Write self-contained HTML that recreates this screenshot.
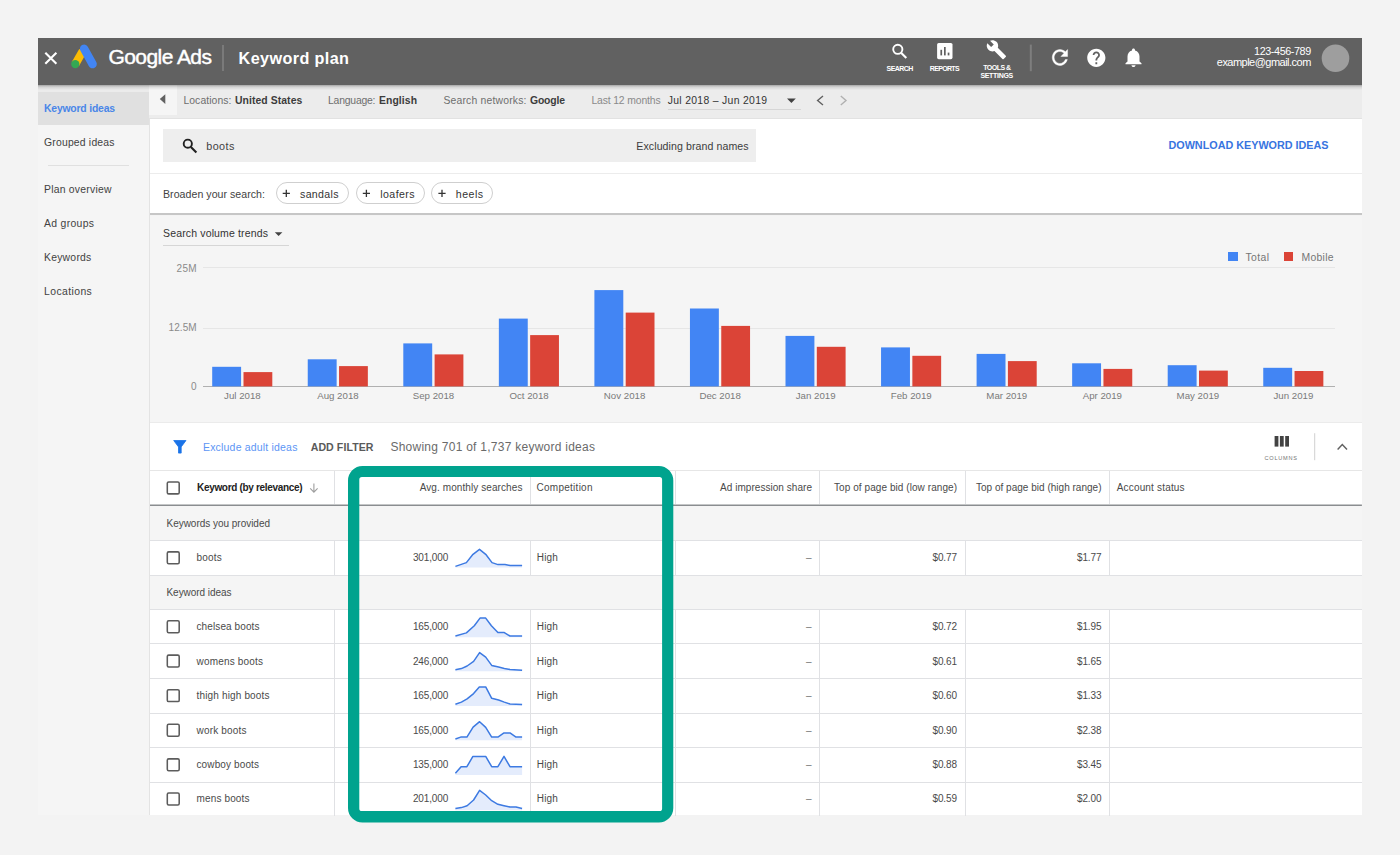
<!DOCTYPE html>
<html lang="en">
<head>
<meta charset="utf-8">
<title>Keyword plan - Google Ads</title>
<style>
html,body{margin:0;padding:0}
body{width:1400px;height:855px;position:relative;overflow:hidden;background:#f3f3f3;font-family:"Liberation Sans", sans-serif;}
.b{position:absolute;box-sizing:border-box}
.t{position:absolute;white-space:nowrap;line-height:1;margin:0;padding:0}
svg{position:absolute;left:0;top:0;overflow:visible}
</style>
</head>
<body>
<div class="b " style="left:37.9px;top:84.6px;width:112.0px;height:730.8px;background:#f5f5f5;border-right:1px solid #e3e3e3;"></div>
<div class="b " style="left:37.9px;top:84.6px;width:111.1px;height:7.4px;background:#ebebeb;"></div>
<div class="b " style="left:37.9px;top:92px;width:111.1px;height:32.5px;background:#e0e0e0;"></div>
<div class="b " style="left:47.5px;top:165.3px;width:81.0px;height:1.0px;background:#e0e0e0;"></div>
<div class="b " style="left:149px;top:84.6px;width:1212.9px;height:34.1px;background:#ececec;"></div>
<div class="b " style="left:149px;top:117.7px;width:1212.9px;height:1.0px;background:#e2e2e2;"></div>
<div class="b " style="left:149px;top:84.6px;width:27.5px;height:30.4px;background:#f5f5f5;"></div>
<svg width="1400" height="855"><path d="M165.3 94.3 L159.8 99.1 L165.3 103.9 Z" fill="#616161"/></svg>
<div class="b " style="left:667.7px;top:109px;width:133.7px;height:1px;background:#d6d6d6;"></div>
<svg width="1400" height="855"><path d="M787 98.6 L795.8 98.6 L791.4 103 Z" fill="#424242"/><path d="M823 96 L817.6 100.5 L823 105" fill="none" stroke="#616161" stroke-width="1.4"/><path d="M840.8 96 L846 100.5 L840.8 105" fill="none" stroke="#b0b0b0" stroke-width="1.4"/></svg>
<div class="b " style="left:37.9px;top:38px;width:1324.0px;height:46.6px;background:#616161;"></div>
<div class="b " style="left:37.9px;top:84.6px;width:1324.0px;height:5.4px;background:linear-gradient(rgba(0,0,0,.30),rgba(0,0,0,.10) 40%,rgba(0,0,0,0));"></div>
<svg width="1400" height="855"><path d="M45.3 52.7 L56.4 63.8 M56.4 52.7 L45.3 63.8" stroke="#fff" stroke-width="2.1" fill="none"/><path d="M75.3 64.1 L82.8 51" stroke="#fbbc04" stroke-width="8.2" fill="none"/><path d="M84.1 48.7 L92.6 64.1" stroke="#4285f4" stroke-width="8.4" stroke-linecap="round" fill="none"/><circle cx="75.3" cy="64.1" r="4.15" fill="#34a853"/><rect x="222.1" y="45" width="1.8" height="26" fill="#7e7e7e"/><rect x="1029.8" y="44.6" width="2" height="26.6" fill="#7e7e7e"/><circle cx="897.8" cy="49.3" r="4.6" stroke="#fff" stroke-width="1.9" fill="none"/><path d="M901.3 52.9 L906.3 57.9" stroke="#fff" stroke-width="2.1" fill="none"/><rect x="937.1" y="43" width="15.4" height="16.2" rx="1.6" fill="#fff"/><rect x="940.4" y="49.8" width="1.7" height="5.6" fill="#616161"/><rect x="944" y="47" width="1.7" height="8.4" fill="#616161"/><rect x="947.7" y="52.6" width="1.7" height="2.8" fill="#616161"/><path transform="translate(985.9,39.2) scale(0.875)" fill="#fff" d="M22.7 19l-9.1-9.1c.9-2.3.4-5-1.5-6.9-2-2-5-2.4-7.4-1.3L9 6 6 9 1.6 4.7C.4 7.1.9 10.1 2.9 12.1c1.9 1.9 4.6 2.4 6.9 1.5l9.1 9.1c.4.4 1 .4 1.4 0l2.3-2.3c.5-.4.5-1.1.1-1.4z"/><path transform="translate(1048.4,45.5) scale(0.96,1.0)" fill="#fff" stroke="#fff" stroke-width="0.4" d="M17.65 6.35C16.2 4.9 14.21 4 12 4c-4.42 0-7.99 3.58-7.99 8s3.57 8 7.99 8c3.73 0 6.84-2.55 7.73-6h-2.08c-.82 2.33-3.04 4-5.65 4-3.31 0-6-2.69-6-6s2.690-6 6-6c1.66 0 3.14.69 4.22 1.78L13 11h7V4l-2.35 2.35z"/><path transform="translate(1085.4,46.9) scale(0.91)" fill="#fff" d="M12 2C6.48 2 2 6.48 2 12s4.48 10 10 10 10-4.48 10-10S17.52 2 12 2zm1 17h-2v-2h2v2zm2.07-7.75l-.9.920C13.45 12.9 13 13.5 13 15h-2v-.5c0-1.1.45-2.1 1.17-2.83l1.240-1.260c.37-.36.59-.86.59-1.410 0-1.1-.9-2-2-2s-2 .9-2 2H8c0-2.210 1.790-4 4-4s4 1.790 4 4c0 .88-.36 1.680-.93 2.250z"/><path transform="translate(1121.5,46.1) scale(1.0,0.955)" fill="#fff" d="M12 22c1.1 0 2-.9 2-2h-4c0 1.1.89 2 2 2zm6-6v-5c0-3.070-1.640-5.640-4.500-6.320V4c0-.83-.67-1.500-1.500-1.500s-1.500.67-1.500 1.500v.68C7.630 5.360 6 7.920 6 11v5l-2 2v1h16v-1l-2-2z"/><circle cx="1335.5" cy="58.2" r="13.8" fill="#9e9e9e"/></svg>
<div class="b " style="left:150px;top:118.7px;width:1211.9px;height:94.3px;background:#fff;"></div>
<div class="b " style="left:150px;top:213.2px;width:1211.9px;height:2.3px;background:#c6c6c6;"></div>
<div class="b " style="left:163px;top:128.6px;width:592.6px;height:33.8px;background:#eeeeee;"></div>
<svg width="1400" height="855"><circle cx="187.8" cy="143.7" r="4.1" stroke="#212121" stroke-width="1.9" fill="none"/><path d="M190.9 146.9 L196.4 152.4" stroke="#212121" stroke-width="2.1" fill="none"/></svg>
<div class="b " style="left:150px;top:172.6px;width:1211.9px;height:1.0px;background:#ececec;"></div>
<div class="b " style="left:275.7px;top:182.3px;width:73.5px;height:22.2px;background:#fff;border:1px solid #cfcfcf;border-radius:11.2px;"></div>
<svg width="1400" height="855"><path d="M282.7 193.4 H289.90000000000003 M286.3 189.8 V197" stroke="#333" stroke-width="1.3" fill="none"/></svg>
<div class="b " style="left:355.8px;top:182.3px;width:69.2px;height:22.2px;background:#fff;border:1px solid #cfcfcf;border-radius:11.2px;"></div>
<svg width="1400" height="855"><path d="M362.8 193.4 H370.00000000000006 M366.40000000000003 189.8 V197" stroke="#333" stroke-width="1.3" fill="none"/></svg>
<div class="b " style="left:431.4px;top:182.3px;width:62.0px;height:22.2px;background:#fff;border:1px solid #cfcfcf;border-radius:11.2px;"></div>
<svg width="1400" height="855"><path d="M438.4 193.4 H445.6 M442.0 189.8 V197" stroke="#333" stroke-width="1.3" fill="none"/></svg>
<div class="b " style="left:150px;top:215.7px;width:1211.9px;height:206.7px;background:#f5f5f5;"></div>
<div class="b " style="left:163px;top:245.3px;width:125.6px;height:1.0px;background:#d6d6d6;"></div>
<svg width="1400" height="855"><path d="M274.8 232.2 L282.4 232.2 L278.6 236 Z" fill="#424242"/></svg>
<div class="b " style="left:202.5px;top:267px;width:1132.8px;height:1px;background:#e6e6e6;"></div>
<div class="b " style="left:202.5px;top:327.6px;width:1132.8px;height:1.0px;background:#e6e6e6;"></div>
<div class="b " style="left:202.5px;top:385.6px;width:1132.8px;height:1.0px;background:#b0b0b0;"></div>
<svg width="1400" height="855"><rect x="212.20" y="366.8" width="28.9" height="19.60" fill="#4285f4"/><rect x="243.50" y="372.1" width="28.8" height="14.30" fill="#db4437"/><rect x="307.75" y="359.3" width="28.9" height="27.10" fill="#4285f4"/><rect x="339.05" y="366.1" width="28.8" height="20.30" fill="#db4437"/><rect x="403.30" y="343.4" width="28.9" height="43.00" fill="#4285f4"/><rect x="434.60" y="354.4" width="28.8" height="32.00" fill="#db4437"/><rect x="498.85" y="318.6" width="28.9" height="67.80" fill="#4285f4"/><rect x="530.15" y="335.1" width="28.8" height="51.30" fill="#db4437"/><rect x="594.40" y="290.1" width="28.9" height="96.30" fill="#4285f4"/><rect x="625.70" y="312.6" width="28.8" height="73.80" fill="#db4437"/><rect x="689.95" y="308.5" width="28.9" height="77.90" fill="#4285f4"/><rect x="721.25" y="325.9" width="28.8" height="60.50" fill="#db4437"/><rect x="785.50" y="335.9" width="28.9" height="50.50" fill="#4285f4"/><rect x="816.80" y="346.8" width="28.8" height="39.60" fill="#db4437"/><rect x="881.05" y="347.4" width="28.9" height="39.00" fill="#4285f4"/><rect x="912.35" y="355.8" width="28.8" height="30.60" fill="#db4437"/><rect x="976.60" y="353.9" width="28.9" height="32.50" fill="#4285f4"/><rect x="1007.90" y="361.1" width="28.8" height="25.30" fill="#db4437"/><rect x="1072.15" y="363.3" width="28.9" height="23.10" fill="#4285f4"/><rect x="1103.45" y="368.9" width="28.8" height="17.50" fill="#db4437"/><rect x="1167.70" y="365.2" width="28.9" height="21.20" fill="#4285f4"/><rect x="1199.00" y="370.6" width="28.8" height="15.80" fill="#db4437"/><rect x="1263.25" y="367.8" width="28.9" height="18.60" fill="#4285f4"/><rect x="1294.55" y="371.0" width="28.8" height="15.40" fill="#db4437"/></svg>
<div class="b " style="left:1228px;top:251.5px;width:10px;height:9.5px;background:#4285f4;"></div>
<div class="b " style="left:1283.5px;top:251.5px;width:9.5px;height:9.5px;background:#db4437;"></div>
<div class="b " style="left:150px;top:422.4px;width:1211.9px;height:393.0px;background:#fff;"></div>
<div class="b " style="left:150px;top:422.4px;width:1211.9px;height:0.8px;background:#ebebeb;"></div>
<svg width="1400" height="855"><path d="M173.7 440.5 H186 L181.2 446.9 V453.1 H178.5 V446.9 Z" fill="#1a73e8" stroke="#1a73e8" stroke-width="0.8" stroke-linejoin="round"/><rect x="1274.6" y="436" width="3.8" height="10.6" fill="#424242"/><rect x="1279.9" y="436" width="3.8" height="10.6" fill="#424242"/><rect x="1285.2" y="436" width="3.8" height="10.6" fill="#424242"/><rect x="1314.2" y="433.2" width="1" height="27" fill="#d0d0d0"/><path d="M1337.6 449.4 L1342.3 444.6 L1347 449.4" stroke="#616161" stroke-width="1.5" fill="none"/></svg>
<div class="b " style="left:150px;top:470.3px;width:1211.9px;height:1.0px;background:#e6e6e6;"></div>
<svg width="1400" height="855"><rect x="150" y="504.5" width="1211.9" height="1.7" fill="#8a8d90"/></svg>
<div class="b " style="left:333.5px;top:471.3px;width:1.0px;height:33.1px;background:#e0e1e4;"></div>
<div class="b " style="left:529.5px;top:471.3px;width:1.0px;height:33.1px;background:#e0e1e4;"></div>
<div class="b " style="left:674.5px;top:471.3px;width:1.0px;height:33.1px;background:#e0e1e4;"></div>
<div class="b " style="left:818.5px;top:471.3px;width:1.0px;height:33.1px;background:#e0e1e4;"></div>
<div class="b " style="left:964.5px;top:471.3px;width:1.0px;height:33.1px;background:#e0e1e4;"></div>
<div class="b " style="left:1108.5px;top:471.3px;width:1.0px;height:33.1px;background:#e0e1e4;"></div>
<svg width="1400" height="855"><rect x="167.3" y="481.95" width="11.9" height="11.9" rx="1.4" fill="#fff" stroke="#5c5c5c" stroke-width="1.55"/></svg>
<svg width="1400" height="855"><path d="M313.9 483.6 V492 M310.2 488.4 L313.9 492.1 L317.6 488.4" stroke="#9e9e9e" stroke-width="1.1" fill="none"/></svg>
<div class="b " style="left:150px;top:505.6px;width:1211.9px;height:34.9px;background:#f5f5f5;"></div>
<div class="b " style="left:333.5px;top:540.5px;width:1.0px;height:34.6px;background:#e0e1e4;"></div>
<div class="b " style="left:529.5px;top:540.5px;width:1.0px;height:34.6px;background:#e0e1e4;"></div>
<div class="b " style="left:674.5px;top:540.5px;width:1.0px;height:34.6px;background:#e0e1e4;"></div>
<div class="b " style="left:818.5px;top:540.5px;width:1.0px;height:34.6px;background:#e0e1e4;"></div>
<div class="b " style="left:964.5px;top:540.5px;width:1.0px;height:34.6px;background:#e0e1e4;"></div>
<div class="b " style="left:1108.5px;top:540.5px;width:1.0px;height:34.6px;background:#e0e1e4;"></div>
<svg width="1400" height="855"><rect x="167.3" y="551.85" width="11.9" height="11.9" rx="1.4" fill="#fff" stroke="#5c5c5c" stroke-width="1.55"/></svg>
<div class="b " style="left:150px;top:575.1px;width:1211.9px;height:34.5px;background:#f5f5f5;"></div>
<div class="b " style="left:333.5px;top:609.6px;width:1.0px;height:34.3px;background:#e0e1e4;"></div>
<div class="b " style="left:529.5px;top:609.6px;width:1.0px;height:34.3px;background:#e0e1e4;"></div>
<div class="b " style="left:674.5px;top:609.6px;width:1.0px;height:34.3px;background:#e0e1e4;"></div>
<div class="b " style="left:818.5px;top:609.6px;width:1.0px;height:34.3px;background:#e0e1e4;"></div>
<div class="b " style="left:964.5px;top:609.6px;width:1.0px;height:34.3px;background:#e0e1e4;"></div>
<div class="b " style="left:1108.5px;top:609.6px;width:1.0px;height:34.3px;background:#e0e1e4;"></div>
<svg width="1400" height="855"><rect x="167.3" y="620.80" width="11.9" height="11.9" rx="1.4" fill="#fff" stroke="#5c5c5c" stroke-width="1.55"/></svg>
<div class="b " style="left:333.5px;top:643.9px;width:1.0px;height:34.3px;background:#e0e1e4;"></div>
<div class="b " style="left:529.5px;top:643.9px;width:1.0px;height:34.3px;background:#e0e1e4;"></div>
<div class="b " style="left:674.5px;top:643.9px;width:1.0px;height:34.3px;background:#e0e1e4;"></div>
<div class="b " style="left:818.5px;top:643.9px;width:1.0px;height:34.3px;background:#e0e1e4;"></div>
<div class="b " style="left:964.5px;top:643.9px;width:1.0px;height:34.3px;background:#e0e1e4;"></div>
<div class="b " style="left:1108.5px;top:643.9px;width:1.0px;height:34.3px;background:#e0e1e4;"></div>
<svg width="1400" height="855"><rect x="167.3" y="655.10" width="11.9" height="11.9" rx="1.4" fill="#fff" stroke="#5c5c5c" stroke-width="1.55"/></svg>
<div class="b " style="left:333.5px;top:678.2px;width:1.0px;height:34.8px;background:#e0e1e4;"></div>
<div class="b " style="left:529.5px;top:678.2px;width:1.0px;height:34.8px;background:#e0e1e4;"></div>
<div class="b " style="left:674.5px;top:678.2px;width:1.0px;height:34.8px;background:#e0e1e4;"></div>
<div class="b " style="left:818.5px;top:678.2px;width:1.0px;height:34.8px;background:#e0e1e4;"></div>
<div class="b " style="left:964.5px;top:678.2px;width:1.0px;height:34.8px;background:#e0e1e4;"></div>
<div class="b " style="left:1108.5px;top:678.2px;width:1.0px;height:34.8px;background:#e0e1e4;"></div>
<svg width="1400" height="855"><rect x="167.3" y="689.65" width="11.9" height="11.9" rx="1.4" fill="#fff" stroke="#5c5c5c" stroke-width="1.55"/></svg>
<div class="b " style="left:333.5px;top:713.0px;width:1.0px;height:34.5px;background:#e0e1e4;"></div>
<div class="b " style="left:529.5px;top:713.0px;width:1.0px;height:34.5px;background:#e0e1e4;"></div>
<div class="b " style="left:674.5px;top:713.0px;width:1.0px;height:34.5px;background:#e0e1e4;"></div>
<div class="b " style="left:818.5px;top:713.0px;width:1.0px;height:34.5px;background:#e0e1e4;"></div>
<div class="b " style="left:964.5px;top:713.0px;width:1.0px;height:34.5px;background:#e0e1e4;"></div>
<div class="b " style="left:1108.5px;top:713.0px;width:1.0px;height:34.5px;background:#e0e1e4;"></div>
<svg width="1400" height="855"><rect x="167.3" y="724.30" width="11.9" height="11.9" rx="1.4" fill="#fff" stroke="#5c5c5c" stroke-width="1.55"/></svg>
<div class="b " style="left:333.5px;top:747.5px;width:1.0px;height:34.6px;background:#e0e1e4;"></div>
<div class="b " style="left:529.5px;top:747.5px;width:1.0px;height:34.6px;background:#e0e1e4;"></div>
<div class="b " style="left:674.5px;top:747.5px;width:1.0px;height:34.6px;background:#e0e1e4;"></div>
<div class="b " style="left:818.5px;top:747.5px;width:1.0px;height:34.6px;background:#e0e1e4;"></div>
<div class="b " style="left:964.5px;top:747.5px;width:1.0px;height:34.6px;background:#e0e1e4;"></div>
<div class="b " style="left:1108.5px;top:747.5px;width:1.0px;height:34.6px;background:#e0e1e4;"></div>
<svg width="1400" height="855"><rect x="167.3" y="758.85" width="11.9" height="11.9" rx="1.4" fill="#fff" stroke="#5c5c5c" stroke-width="1.55"/></svg>
<div class="b " style="left:333.5px;top:782.1px;width:1.0px;height:33.7px;background:#e0e1e4;"></div>
<div class="b " style="left:529.5px;top:782.1px;width:1.0px;height:33.7px;background:#e0e1e4;"></div>
<div class="b " style="left:674.5px;top:782.1px;width:1.0px;height:33.7px;background:#e0e1e4;"></div>
<div class="b " style="left:818.5px;top:782.1px;width:1.0px;height:33.7px;background:#e0e1e4;"></div>
<div class="b " style="left:964.5px;top:782.1px;width:1.0px;height:33.7px;background:#e0e1e4;"></div>
<div class="b " style="left:1108.5px;top:782.1px;width:1.0px;height:33.7px;background:#e0e1e4;"></div>
<svg width="1400" height="855"><rect x="167.3" y="793.00" width="11.9" height="11.9" rx="1.4" fill="#fff" stroke="#5c5c5c" stroke-width="1.55"/></svg>
<div class="b " style="left:150px;top:540.0px;width:1211.9px;height:1.0px;background:#e0e1e4;"></div>
<div class="b " style="left:150px;top:574.6px;width:1211.9px;height:1.0px;background:#e0e1e4;"></div>
<div class="b " style="left:150px;top:609.1px;width:1211.9px;height:1.0px;background:#e0e1e4;"></div>
<div class="b " style="left:150px;top:643.4px;width:1211.9px;height:1.0px;background:#e0e1e4;"></div>
<div class="b " style="left:150px;top:677.7px;width:1211.9px;height:1.0px;background:#e0e1e4;"></div>
<div class="b " style="left:150px;top:712.5px;width:1211.9px;height:1.0px;background:#e0e1e4;"></div>
<div class="b " style="left:150px;top:747.0px;width:1211.9px;height:1.0px;background:#e0e1e4;"></div>
<div class="b " style="left:150px;top:781.6px;width:1211.9px;height:1.0px;background:#e0e1e4;"></div>
<svg width="1400" height="855"><polygon points="455.4,567.6 455.4,566.4 466.4,562.6 473,554.3 479.5,549.3 485.7,554.3 492,562.6 498,564.6 505,564.6 510,565.4 522.1,565.4 522.1,567.6" fill="#e4ecfc"/><polyline points="455.4,566.4 466.4,562.6 473,554.3 479.5,549.3 485.7,554.3 492,562.6 498,564.6 505,564.6 510,565.4 522.1,565.4" fill="none" stroke="#3d7ae2" stroke-width="1.5" stroke-linejoin="round"/><polygon points="455.4,637.3 455.4,636 466.4,632.9 474.3,625.7 480,618.1 485.7,618.1 491.4,625.7 497.9,632.6 504.3,632.6 510,636 522.1,636 522.1,637.3" fill="#e4ecfc"/><polyline points="455.4,636 466.4,632.9 474.3,625.7 480,618.1 485.7,618.1 491.4,625.7 497.9,632.6 504.3,632.6 510,636 522.1,636" fill="none" stroke="#3d7ae2" stroke-width="1.5" stroke-linejoin="round"/><polygon points="455.4,671.3 455.4,669.7 461.4,668.6 467.1,666 473.6,661.4 479.6,652.6 485.7,657.1 491.7,665.4 498.6,667.1 504.3,668.6 510,669.4 522.1,670.3 522.1,671.3" fill="#e4ecfc"/><polyline points="455.4,669.7 461.4,668.6 467.1,666 473.6,661.4 479.6,652.6 485.7,657.1 491.7,665.4 498.6,667.1 504.3,668.6 510,669.4 522.1,670.3" fill="none" stroke="#3d7ae2" stroke-width="1.5" stroke-linejoin="round"/><polygon points="455.4,705.9 455.4,704.3 461.4,702.1 467.1,698.9 473.6,693.6 479.3,686.9 485.7,686.9 491.7,698.3 498.6,700 504.3,702.1 510,704 522.1,704.6 522.1,705.9" fill="#e4ecfc"/><polyline points="455.4,704.3 461.4,702.1 467.1,698.9 473.6,693.6 479.3,686.9 485.7,686.9 491.7,698.3 498.6,700 504.3,702.1 510,704 522.1,704.6" fill="none" stroke="#3d7ae2" stroke-width="1.5" stroke-linejoin="round"/><polygon points="455.4,740.2 455.4,739 460.7,737.1 466.9,737.1 473.1,727.1 479.6,721.7 485.7,727.4 491.7,737.1 497.9,737.1 504,732.9 510,732.9 516,737.1 522.1,737.1 522.1,740.2" fill="#e4ecfc"/><polyline points="455.4,739 460.7,737.1 466.9,737.1 473.1,727.1 479.6,721.7 485.7,727.4 491.7,737.1 497.9,737.1 504,732.9 510,732.9 516,737.1 522.1,737.1" fill="none" stroke="#3d7ae2" stroke-width="1.5" stroke-linejoin="round"/><polygon points="455.4,774.9 455.4,773.3 461.1,766.7 466.9,766.7 472.9,756.4 485.7,756.4 491.7,766.7 497.9,766.7 504,756.4 510,766.7 522.1,766.7 522.1,774.9" fill="#e4ecfc"/><polyline points="455.4,773.3 461.1,766.7 466.9,766.7 472.9,756.4 485.7,756.4 491.7,766.7 497.9,766.7 504,756.4 510,766.7 522.1,766.7" fill="none" stroke="#3d7ae2" stroke-width="1.5" stroke-linejoin="round"/><polygon points="455.4,810.2 455.4,808.6 461.4,807.6 467.1,805.7 473.6,800 479.6,790.4 485.7,795 491.7,800.7 497.9,804.3 504,805.7 510,807.1 516,807.1 522.1,808.6 522.1,810.2" fill="#e4ecfc"/><polyline points="455.4,808.6 461.4,807.6 467.1,805.7 473.6,800 479.6,790.4 485.7,795 491.7,800.7 497.9,804.3 504,805.7 510,807.1 516,807.1 522.1,808.6" fill="none" stroke="#3d7ae2" stroke-width="1.5" stroke-linejoin="round"/></svg>
<span class="t" id="t0" style="top:103.74px;font-size:10.4px;color:#4a86e8;font-weight:700;letter-spacing:-0.195px;left:44.00px;">Keyword ideas</span>
<span class="t" id="t1" style="top:137.54px;font-size:10.4px;color:#424242;letter-spacing:0.194px;left:44.00px;">Grouped ideas</span>
<span class="t" id="t2" style="top:185.34px;font-size:10.4px;color:#424242;letter-spacing:0.234px;left:44.00px;">Plan overview</span>
<span class="t" id="t3" style="top:219.14px;font-size:10.4px;color:#424242;letter-spacing:0.328px;left:44.00px;">Ad groups</span>
<span class="t" id="t4" style="top:252.84px;font-size:10.4px;color:#424242;letter-spacing:0.239px;left:44.00px;">Keywords</span>
<span class="t" id="t5" style="top:286.54px;font-size:10.4px;color:#424242;letter-spacing:0.414px;left:44.00px;">Locations</span>
<span class="t" id="t6" style="top:96.44px;font-size:10.4px;color:#6e6e6e;letter-spacing:0.081px;left:183.40px;">Locations:</span>
<span class="t" id="t7" style="top:96.44px;font-size:10.4px;color:#3c3c3c;font-weight:700;letter-spacing:0.074px;left:235.00px;">United States</span>
<span class="t" id="t8" style="top:96.44px;font-size:10.4px;color:#6e6e6e;letter-spacing:-0.203px;left:328.00px;">Language:</span>
<span class="t" id="t9" style="top:96.44px;font-size:10.4px;color:#3c3c3c;font-weight:700;letter-spacing:0.078px;left:379.00px;">English</span>
<span class="t" id="t10" style="top:96.44px;font-size:10.4px;color:#6e6e6e;letter-spacing:0.188px;left:443.40px;">Search networks:</span>
<span class="t" id="t11" style="top:96.44px;font-size:10.4px;color:#3c3c3c;font-weight:700;letter-spacing:-0.159px;left:530.00px;">Google</span>
<span class="t" id="t12" style="top:96.44px;font-size:10.4px;color:#8a8a8a;letter-spacing:-0.142px;left:591.40px;">Last 12 months</span>
<span class="t" id="t13" style="top:96.44px;font-size:10.4px;color:#333;letter-spacing:0.323px;left:667.70px;">Jul 2018 – Jun 2019</span>
<span class="t" id="t14" style="top:45.88px;font-size:21px;color:#fff;letter-spacing:-0.555px;left:108.40px;-webkit-text-stroke:0.45px #fff;">Google Ads</span>
<span class="t" id="t15" style="top:50.12px;font-size:16.2px;color:#fff;font-weight:700;letter-spacing:0.387px;left:238.60px;">Keyword plan</span>
<span class="t" id="t16" style="top:65.39px;font-size:7px;color:#fff;font-weight:700;letter-spacing:-0.592px;left:886.60px;">SEARCH</span>
<span class="t" id="t17" style="top:65.39px;font-size:7px;color:#fff;font-weight:700;letter-spacing:-0.674px;left:929.80px;">REPORTS</span>
<span class="t" id="t18" style="top:64.19px;font-size:7px;color:#fff;font-weight:700;letter-spacing:-0.531px;left:983.20px;">TOOLS &amp;</span>
<span class="t" id="t19" style="top:71.79px;font-size:7px;color:#fff;font-weight:700;letter-spacing:-0.317px;left:980.40px;">SETTINGS</span>
<span class="t" id="t20" style="top:46.15px;font-size:10.8px;color:#fff;letter-spacing:-0.413px;left:1254.10px;">123-456-789</span>
<span class="t" id="t21" style="top:57.45px;font-size:11px;color:#fff;letter-spacing:-0.523px;left:1216.80px;">example@gmail.com</span>
<span class="t" id="t22" style="top:140.75px;font-size:10.8px;color:#424242;letter-spacing:0.395px;left:206.30px;">boots</span>
<span class="t" id="t23" style="top:140.84px;font-size:10.6px;color:#3c3c3c;letter-spacing:0.079px;left:636.30px;">Excluding brand names</span>
<span class="t" id="t24" style="top:140.05px;font-size:10.8px;color:#3874e0;font-weight:700;letter-spacing:-0.007px;left:1168.50px;">DOWNLOAD KEYWORD IDEAS</span>
<span class="t" id="t25" style="top:188.84px;font-size:10.6px;color:#424242;letter-spacing:0.037px;left:163.00px;">Broaden your search:</span>
<span class="t" id="t26" style="top:188.84px;font-size:10.6px;color:#333;letter-spacing:0.331px;left:300.00px;">sandals</span>
<span class="t" id="t27" style="top:188.84px;font-size:10.6px;color:#333;letter-spacing:0.401px;left:380.30px;">loafers</span>
<span class="t" id="t28" style="top:188.84px;font-size:10.6px;color:#333;letter-spacing:0.468px;left:455.80px;">heels</span>
<span class="t" id="t29" style="top:228.49px;font-size:10.5px;color:#333;letter-spacing:0.150px;left:163.00px;">Search volume trends</span>
<span class="t" id="t30" style="top:263.54px;font-size:10px;color:#8a8a8a;letter-spacing:0.273px;left:176.60px;">25M</span>
<span class="t" id="t31" style="top:323.04px;font-size:10px;color:#8a8a8a;letter-spacing:0.051px;left:168.60px;">12.5M</span>
<span class="t" id="t32" style="top:381.54px;font-size:10px;color:#8a8a8a;letter-spacing:0.037px;left:191.00px;">0</span>
<span class="t" id="t33" style="top:391.38px;font-size:9.7px;color:#7a7a7a;left:242.40px;transform:translateX(-50%);">Jul 2018</span>
<span class="t" id="t34" style="top:391.38px;font-size:9.7px;color:#7a7a7a;left:337.95px;transform:translateX(-50%);">Aug 2018</span>
<span class="t" id="t35" style="top:391.38px;font-size:9.7px;color:#7a7a7a;left:433.50px;transform:translateX(-50%);">Sep 2018</span>
<span class="t" id="t36" style="top:391.38px;font-size:9.7px;color:#7a7a7a;left:529.05px;transform:translateX(-50%);">Oct 2018</span>
<span class="t" id="t37" style="top:391.38px;font-size:9.7px;color:#7a7a7a;left:624.60px;transform:translateX(-50%);">Nov 2018</span>
<span class="t" id="t38" style="top:391.38px;font-size:9.7px;color:#7a7a7a;left:720.15px;transform:translateX(-50%);">Dec 2018</span>
<span class="t" id="t39" style="top:391.38px;font-size:9.7px;color:#7a7a7a;left:815.70px;transform:translateX(-50%);">Jan 2019</span>
<span class="t" id="t40" style="top:391.38px;font-size:9.7px;color:#7a7a7a;left:911.25px;transform:translateX(-50%);">Feb 2019</span>
<span class="t" id="t41" style="top:391.38px;font-size:9.7px;color:#7a7a7a;left:1006.80px;transform:translateX(-50%);">Mar 2019</span>
<span class="t" id="t42" style="top:391.38px;font-size:9.7px;color:#7a7a7a;left:1102.35px;transform:translateX(-50%);">Apr 2019</span>
<span class="t" id="t43" style="top:391.38px;font-size:9.7px;color:#7a7a7a;left:1197.90px;transform:translateX(-50%);">May 2019</span>
<span class="t" id="t44" style="top:391.38px;font-size:9.7px;color:#7a7a7a;left:1293.45px;transform:translateX(-50%);">Jun 2019</span>
<span class="t" id="t45" style="top:253.14px;font-size:10.4px;color:#757575;letter-spacing:0.387px;left:1245.50px;">Total</span>
<span class="t" id="t46" style="top:253.14px;font-size:10.4px;color:#757575;letter-spacing:0.278px;left:1301.50px;">Mobile</span>
<span class="t" id="t47" style="top:441.59px;font-size:10.5px;color:#5c95f5;letter-spacing:0.185px;left:203.00px;">Exclude adult ideas</span>
<span class="t" id="t48" style="top:441.84px;font-size:10.6px;color:#5a5a5a;font-weight:700;letter-spacing:0.068px;left:310.70px;">ADD FILTER</span>
<span class="t" id="t49" style="top:441.16px;font-size:12px;color:#6a6a6a;letter-spacing:0.256px;left:390.40px;">Showing 701 of 1,737 keyword ideas</span>
<span class="t" id="t50" style="top:456.08px;font-size:5.6px;color:#757575;letter-spacing:0.736px;left:1264.60px;">COLUMNS</span>
<span class="t" id="t51" style="top:483.44px;font-size:10px;color:#222;font-weight:700;letter-spacing:-0.317px;left:197.00px;">Keyword (by relevance)</span>
<span class="t" id="t52" style="top:483.44px;font-size:10px;color:#4a4a4a;letter-spacing:0.086px;left:419.70px;">Avg. monthly searches</span>
<span class="t" id="t53" style="top:483.44px;font-size:10px;color:#4a4a4a;letter-spacing:0.264px;left:536.50px;">Competition</span>
<span class="t" id="t54" style="top:483.44px;font-size:10px;color:#4a4a4a;letter-spacing:0.047px;left:720.00px;">Ad impression share</span>
<span class="t" id="t55" style="top:483.44px;font-size:10px;color:#4a4a4a;letter-spacing:0.070px;left:834.00px;">Top of page bid (low range)</span>
<span class="t" id="t56" style="top:483.44px;font-size:10px;color:#4a4a4a;letter-spacing:0.015px;left:976.00px;">Top of page bid (high range)</span>
<span class="t" id="t57" style="top:483.44px;font-size:10px;color:#4a4a4a;letter-spacing:0.177px;left:1116.70px;">Account status</span>
<span class="t" id="t58" style="top:518.58px;font-size:10px;color:#4a4a4a;letter-spacing:-0.023px;left:166.50px;">Keywords you provided</span>
<span class="t" id="t59" style="top:553.33px;font-size:10px;color:#4a4a4a;letter-spacing:0.208px;left:196.50px;">boots</span>
<span class="t" id="t60" style="top:553.33px;font-size:10px;color:#4a4a4a;letter-spacing:-0.126px;left:412.90px;">301,000</span>
<span class="t" id="t61" style="top:553.33px;font-size:10px;color:#4a4a4a;letter-spacing:0.141px;left:536.80px;">High</span>
<span class="t" id="t62" style="top:553.33px;font-size:10px;color:#757575;letter-spacing:0.438px;left:806.00px;">–</span>
<span class="t" id="t63" style="top:553.33px;font-size:10px;color:#4a4a4a;letter-spacing:-0.133px;left:932.50px;">$0.77</span>
<span class="t" id="t64" style="top:553.33px;font-size:10px;color:#4a4a4a;letter-spacing:-0.133px;left:1077.00px;">$1.77</span>
<span class="t" id="t65" style="top:587.88px;font-size:10px;color:#4a4a4a;letter-spacing:-0.049px;left:166.50px;">Keyword ideas</span>
<span class="t" id="t66" style="top:622.28px;font-size:10px;color:#4a4a4a;letter-spacing:0.107px;left:196.50px;">chelsea boots</span>
<span class="t" id="t67" style="top:622.28px;font-size:10px;color:#4a4a4a;letter-spacing:-0.126px;left:412.90px;">165,000</span>
<span class="t" id="t68" style="top:622.28px;font-size:10px;color:#4a4a4a;letter-spacing:0.141px;left:536.80px;">High</span>
<span class="t" id="t69" style="top:622.28px;font-size:10px;color:#757575;letter-spacing:0.438px;left:806.00px;">–</span>
<span class="t" id="t70" style="top:622.28px;font-size:10px;color:#4a4a4a;letter-spacing:-0.133px;left:932.50px;">$0.72</span>
<span class="t" id="t71" style="top:622.28px;font-size:10px;color:#4a4a4a;letter-spacing:-0.133px;left:1077.00px;">$1.95</span>
<span class="t" id="t72" style="top:656.58px;font-size:10px;color:#4a4a4a;letter-spacing:0.183px;left:196.50px;">womens boots</span>
<span class="t" id="t73" style="top:656.58px;font-size:10px;color:#4a4a4a;letter-spacing:-0.126px;left:412.90px;">246,000</span>
<span class="t" id="t74" style="top:656.58px;font-size:10px;color:#4a4a4a;letter-spacing:0.141px;left:536.80px;">High</span>
<span class="t" id="t75" style="top:656.58px;font-size:10px;color:#757575;letter-spacing:0.438px;left:806.00px;">–</span>
<span class="t" id="t76" style="top:656.58px;font-size:10px;color:#4a4a4a;letter-spacing:-0.133px;left:932.50px;">$0.61</span>
<span class="t" id="t77" style="top:656.58px;font-size:10px;color:#4a4a4a;letter-spacing:-0.133px;left:1077.00px;">$1.65</span>
<span class="t" id="t78" style="top:691.13px;font-size:10px;color:#4a4a4a;letter-spacing:0.158px;left:196.50px;">thigh high boots</span>
<span class="t" id="t79" style="top:691.13px;font-size:10px;color:#4a4a4a;letter-spacing:-0.126px;left:412.90px;">165,000</span>
<span class="t" id="t80" style="top:691.13px;font-size:10px;color:#4a4a4a;letter-spacing:0.141px;left:536.80px;">High</span>
<span class="t" id="t81" style="top:691.13px;font-size:10px;color:#757575;letter-spacing:0.438px;left:806.00px;">–</span>
<span class="t" id="t82" style="top:691.13px;font-size:10px;color:#4a4a4a;letter-spacing:-0.133px;left:932.50px;">$0.60</span>
<span class="t" id="t83" style="top:691.13px;font-size:10px;color:#4a4a4a;letter-spacing:-0.133px;left:1077.00px;">$1.33</span>
<span class="t" id="t84" style="top:725.78px;font-size:10px;color:#4a4a4a;letter-spacing:0.182px;left:196.50px;">work boots</span>
<span class="t" id="t85" style="top:725.78px;font-size:10px;color:#4a4a4a;letter-spacing:-0.126px;left:412.90px;">165,000</span>
<span class="t" id="t86" style="top:725.78px;font-size:10px;color:#4a4a4a;letter-spacing:0.141px;left:536.80px;">High</span>
<span class="t" id="t87" style="top:725.78px;font-size:10px;color:#757575;letter-spacing:0.438px;left:806.00px;">–</span>
<span class="t" id="t88" style="top:725.78px;font-size:10px;color:#4a4a4a;letter-spacing:-0.133px;left:932.50px;">$0.90</span>
<span class="t" id="t89" style="top:725.78px;font-size:10px;color:#4a4a4a;letter-spacing:-0.133px;left:1077.00px;">$2.38</span>
<span class="t" id="t90" style="top:760.33px;font-size:10px;color:#4a4a4a;letter-spacing:0.122px;left:196.50px;">cowboy boots</span>
<span class="t" id="t91" style="top:760.33px;font-size:10px;color:#4a4a4a;letter-spacing:-0.126px;left:412.90px;">135,000</span>
<span class="t" id="t92" style="top:760.33px;font-size:10px;color:#4a4a4a;letter-spacing:0.141px;left:536.80px;">High</span>
<span class="t" id="t93" style="top:760.33px;font-size:10px;color:#757575;letter-spacing:0.438px;left:806.00px;">–</span>
<span class="t" id="t94" style="top:760.33px;font-size:10px;color:#4a4a4a;letter-spacing:-0.133px;left:932.50px;">$0.88</span>
<span class="t" id="t95" style="top:760.33px;font-size:10px;color:#4a4a4a;letter-spacing:-0.133px;left:1077.00px;">$3.45</span>
<span class="t" id="t96" style="top:794.49px;font-size:10px;color:#4a4a4a;letter-spacing:0.144px;left:196.50px;">mens boots</span>
<span class="t" id="t97" style="top:794.49px;font-size:10px;color:#4a4a4a;letter-spacing:-0.126px;left:412.90px;">201,000</span>
<span class="t" id="t98" style="top:794.49px;font-size:10px;color:#4a4a4a;letter-spacing:0.141px;left:536.80px;">High</span>
<span class="t" id="t99" style="top:794.49px;font-size:10px;color:#757575;letter-spacing:0.438px;left:806.00px;">–</span>
<span class="t" id="t100" style="top:794.49px;font-size:10px;color:#4a4a4a;letter-spacing:-0.133px;left:932.50px;">$0.59</span>
<span class="t" id="t101" style="top:794.49px;font-size:10px;color:#4a4a4a;letter-spacing:-0.133px;left:1077.00px;">$2.00</span>
<svg width="1400" height="855"><path fill="#00a38e" fill-rule="evenodd" d="M362.5 466 H658.8 A14.5 14.5 0 0 1 673.3 480.5 V807.9 A14.5 14.5 0 0 1 658.8 822.4 H362.5 A14.5 14.5 0 0 1 348.0 807.9 V480.5 A14.5 14.5 0 0 1 362.5 466 Z M361.90000000000003 477.1 H659.5 A2.6 2.6 0 0 1 662.1 479.70000000000005 V808.4 A2.6 2.6 0 0 1 659.5 811 H361.90000000000003 A2.6 2.6 0 0 1 359.3 808.4 V479.70000000000005 A2.6 2.6 0 0 1 361.90000000000003 477.1 Z"/></svg>
</body>
</html>
